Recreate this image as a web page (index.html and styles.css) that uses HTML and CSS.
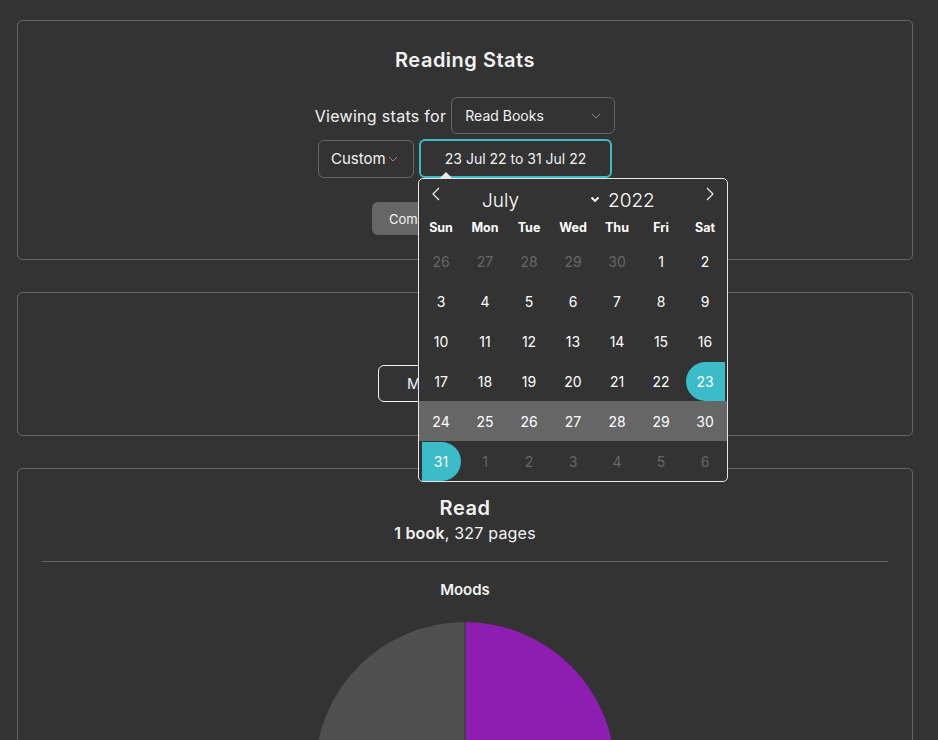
FILE: index.html
```html
<!DOCTYPE html>
<html lang="en">
<head>
    <meta name="viewport" content="width=device-width, initial-scale=1">
    <meta charset="utf-8">

    <link rel="stylesheet" href="styles.css">
</head>
<body>

<div class="page">

  <!-- filters -->
  <section class="card stats-card">
    <h2 class="card-title">Reading Stats</h2>

    <div class="filter-row">
      <span class="filter-label">Viewing stats for</span>
      <div class="select select-books">
        <span>Read Books</span>
        <svg class="chev" width="10" height="6" viewBox="0 0 10 6"><path d="M1 1l4 4 4-4" fill="none" stroke="#8a8a8a" stroke-width="1"/></svg>
      </div>
    </div>

    <div class="filter-row">
      <div class="select select-range">
        <span>Custom</span>
        <svg class="chev" width="10" height="6" viewBox="0 0 10 6"><path d="M1 1l4 4 4-4" fill="none" stroke="#8a8a8a" stroke-width="1"/></svg>
      </div>
      <div class="date-field">
        <div class="date-input">23 Jul 22 to 31 Jul 22</div>

        <div class="calendar">
          <div class="cal-months">
            <span class="cal-nav">
              <svg width="8" height="14" viewBox="0 0 8 14"><path d="M7 1L1 7l6 6" fill="none" stroke="#eee" stroke-width="1.2"/></svg>
            </span>
            <div class="cal-current">
              <span class="cal-month">July</span>
              <svg class="cal-month-chev" width="10" height="7" viewBox="0 0 10 7"><path d="M1.5 1.5l3.5 3.5 3.5-3.5" fill="none" stroke="#fff" stroke-width="1.8"/></svg>
              <span class="cal-year">2022</span>
            </div>
            <span class="cal-nav">
              <svg width="8" height="14" viewBox="0 0 8 14"><path d="M1 1l6 6-6 6" fill="none" stroke="#eee" stroke-width="1.2"/></svg>
            </span>
          </div>

          <div class="cal-weekdays">
            <span>Sun</span><span>Mon</span><span>Tue</span><span>Wed</span><span>Thu</span><span>Fri</span><span>Sat</span>
          </div>

          <div class="cal-days">
            <div class="cal-week">
              <span class="day other">26</span><span class="day other">27</span><span class="day other">28</span><span class="day other">29</span><span class="day other">30</span><span class="day">1</span><span class="day">2</span>
            </div>
            <div class="cal-week">
              <span class="day">3</span><span class="day">4</span><span class="day">5</span><span class="day">6</span><span class="day">7</span><span class="day">8</span><span class="day">9</span>
            </div>
            <div class="cal-week">
              <span class="day">10</span><span class="day">11</span><span class="day">12</span><span class="day">13</span><span class="day">14</span><span class="day">15</span><span class="day">16</span>
            </div>
            <div class="cal-week">
              <span class="day">17</span><span class="day">18</span><span class="day">19</span><span class="day">20</span><span class="day">21</span><span class="day">22</span><span class="day start">23</span>
            </div>
            <div class="cal-week in-range">
              <span class="day">24</span><span class="day">25</span><span class="day">26</span><span class="day">27</span><span class="day">28</span><span class="day">29</span><span class="day">30</span>
            </div>
            <div class="cal-week">
              <span class="day end">31</span><span class="day other">1</span><span class="day other">2</span><span class="day other">3</span><span class="day other">4</span><span class="day other">5</span><span class="day other">6</span>
            </div>
          </div>
        </div>
      </div>
    </div>

    <button class="btn btn-compare">Compare with another period</button>
  </section>

  <!-- goals -->
  <section class="card goals-card">
    <button class="btn btn-outline">Manage goals</button>
  </section>

  <!-- read summary -->
  <section class="card read-card">
    <h2 class="card-title">Read</h2>
    <p class="read-summary"><b>1 book</b>, 327 pages</p>
    <hr class="divider">
    <h3 class="chart-title">Moods</h3>
    <svg class="pie" width="300" height="300" viewBox="0 0 300 300">
      <path d="M150 150 L150 0 A150 150 0 0 0 150 300 Z" fill="#4f4f4f"/>
      <path d="M150 150 L150 0 A150 150 0 0 1 150 300 Z" fill="#8e1db2"/>
      <line x1="150" y1="0" x2="150" y2="300" stroke="#3a3a3a" stroke-width="1.5"/>
    </svg>
  </section>

</div>

</body>
</html>
```

FILE: styles.css
```css
* {
  box-sizing: border-box;
}
body {
  margin: 0;
  background-color: #333333;
  color: #f2f2f2;
  font-family: "Inter", "Noto Sans", sans-serif;
  overflow: hidden;
}

.page {
  padding: 20px 25px 0 17px;
  display: flex;
  flex-direction: column;
  gap: 32px;
}



.card {
  border: 1px solid #666666;
  border-radius: 5px;
  display: flex;
  flex-direction: column;
  align-items: center;
}
.stats-card {
  padding: 24px 24px 24px;
}
.goals-card {
  padding: 72px 24px 33px;
}
.read-card {
  padding: 24px 24px 40px;
}
.card-title {
  margin: 0;
  font-size: 20px;
  line-height: 30px;
  font-weight: 600;
  letter-spacing: 0.5px;
}



.filter-row {
  display: flex;
  align-items: center;
  gap: 5px;
  margin-top: 5px;
}
.stats-card .card-title + .filter-row {
  margin-top: 22px;
}
.filter-label {
  font-size: 16px;
  letter-spacing: 0.3px;
}
.select {
  display: flex;
  align-items: center;
  height: 37px;
  border: 1px solid #666666;
  border-radius: 6px;
  font-size: 14px;
}
.select-books {
  width: 164px;
  padding: 0 13px 0 13px;
  justify-content: space-between;
}
.select-range {
  width: 96px;
  height: 38px;
  padding: 0 12px;
  gap: 2px;
  font-size: 15px;
}
.chev {
  flex-shrink: 0;
}

.date-field {
  position: relative;
}
.date-input {
  width: 193px;
  height: 39px;
  border: 2px solid #3cbcc8;
  border-radius: 6px;
  display: flex;
  align-items: center;
  justify-content: center;
  font-size: 14px;
}



.btn {
  font-family: inherit;
  color: #f2f2f2;
  cursor: pointer;
  border-radius: 6px;
  white-space: nowrap;
  overflow: hidden;
  text-align: left;
}
.btn-compare {
  margin-top: 24px;
  width: 186px;
  height: 33px;
  padding: 0 17px;
  border: none;
  background-color: #666666;
  font-size: 13px;
}
.btn-outline {
  width: 174px;
  height: 37px;
  padding: 0 28px;
  border: 1px solid #f2f2f2;
  background-color: transparent;
  font-size: 15px;
}



.calendar {
  position: absolute;
  z-index: 10;
  top: 100%;
  left: -1px;
  width: 310px;
  background-color: #333333;
  border: 1px solid #e6e6e6;
  border-radius: 5px;
}
.calendar::before {
  content: "";
  position: absolute;
  top: -7px;
  left: 21px;
  border: 6px solid transparent;
  border-top: none;
  border-bottom: 6px solid #e6e6e6;
}
.cal-months {
  height: 34px;
  display: flex;
  align-items: center;
}
.cal-nav {
  width: 34px;
  height: 34px;
  display: flex;
  align-items: center;
  justify-content: center;
  padding-bottom: 4px;
}
.cal-current {
  flex: 1;
  display: flex;
  align-items: center;
  padding-left: 29px;
  padding-top: 8px;
  font-size: 19px;
  font-weight: 300;
  color: #fff;
}
.cal-month {
  width: 108px;
}
.cal-month-chev {
  margin-bottom: 2px;
}
.cal-year {
  margin-left: 8px;
}

.cal-weekdays,
.cal-week {
  display: grid;
  grid-template-columns: repeat(7, 44px);
}
.cal-weekdays {
  height: 28px;
  align-items: center;
  font-size: 12.5px;
  font-weight: 700;
  text-align: center;
  color: #fff;
}
.cal-week {
  height: 40px;
  align-items: center;
  justify-items: center;
}
.cal-week.in-range {
  background-color: #666666;
}
.day {
  width: 39px;
  height: 39px;
  display: flex;
  align-items: center;
  justify-content: center;
  font-size: 14px;
  color: #fff;
}
.day.other {
  color: #666666;
}
.day.start {
  background-color: #3cbcc8;
  border-radius: 50px 0 0 50px;
}
.day.end {
  background-color: #3cbcc8;
  border-radius: 0 50px 50px 0;
}



.read-summary {
  margin: 0;
  font-size: 16px;
  line-height: 20px;
  letter-spacing: 0.2px;
}
.read-summary b {
  font-weight: 600;
}
.divider {
  width: 100%;
  margin: 18px 0 0;
  border: none;
  border-top: 1px solid #666666;
}
.chart-title {
  margin: 17px 0 0;
  font-size: 15px;
  line-height: 22px;
  font-weight: 600;
}
.pie {
  margin-top: 21px;
}
```
